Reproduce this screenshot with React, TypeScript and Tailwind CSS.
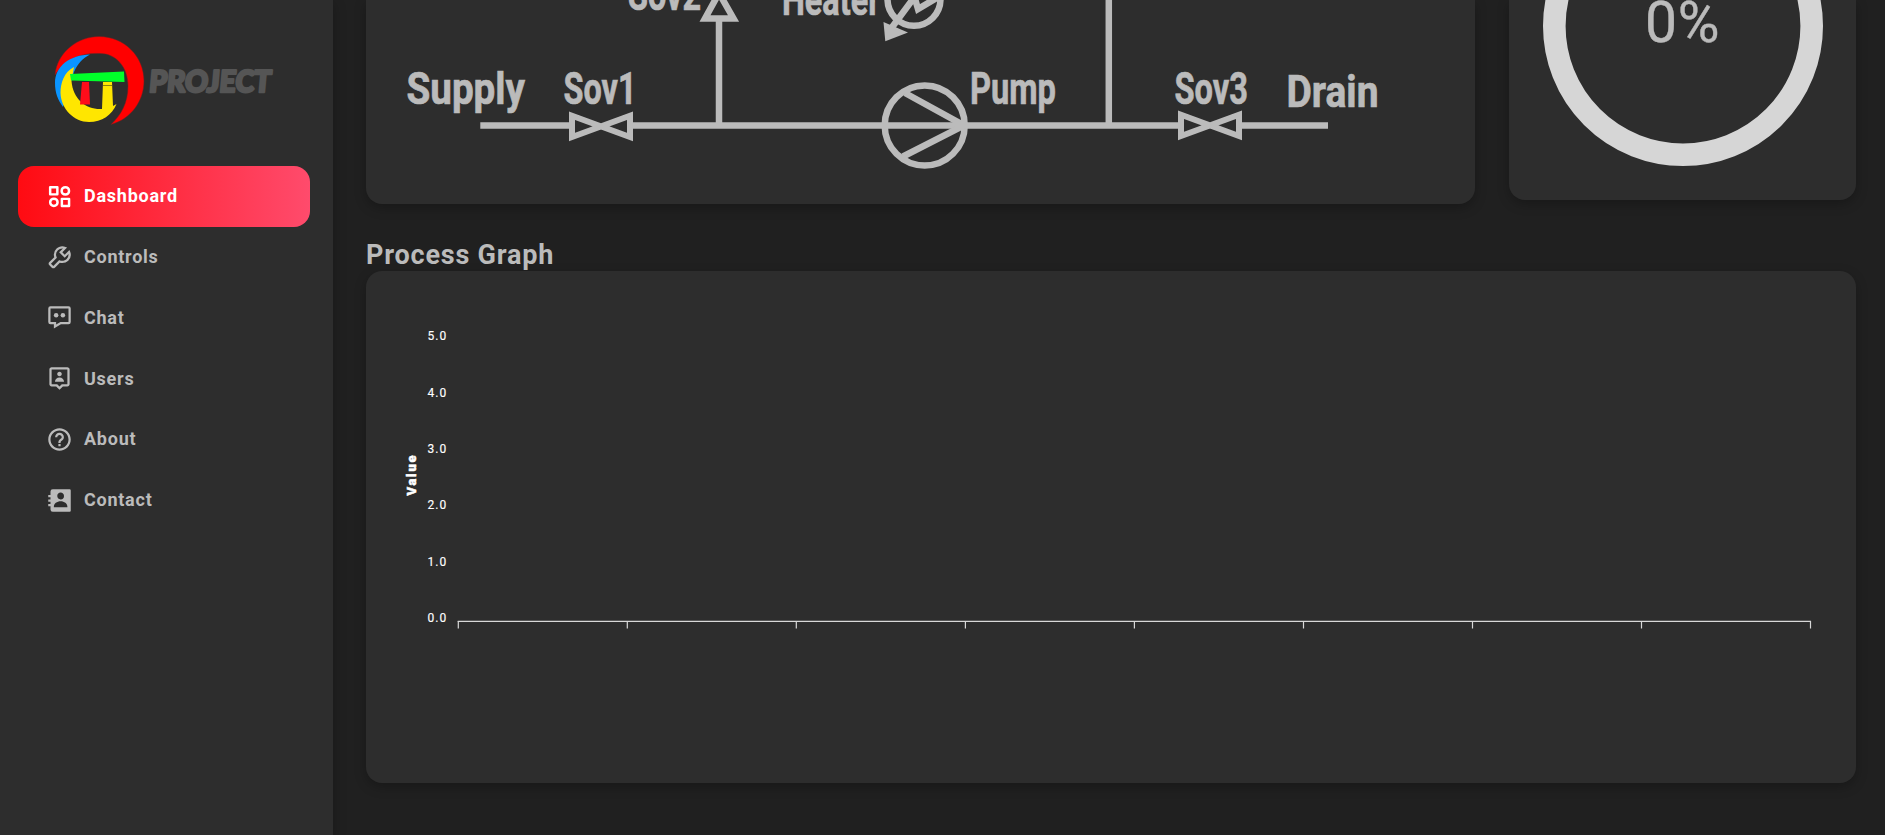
import type { ReactNode } from "react";
import { BiWrench, BiUserPin, BiHelpCircle, BiSolidContact } from "react-icons/bi";

function DashboardIcon() {
  return (
    <svg width="27" height="27" viewBox="0 0 24 24" fill="none" stroke="currentColor" strokeWidth="2.200">
      <path d="M3.700 3.700h6.400v6.400H3.700zM14.100 14.100h6.400v6.400h-6.400z" strokeLinejoin="round" />
      <circle cx="17.200" cy="7" r="3.300" />
      <circle cx="7" cy="17.200" r="3.300" />
    </svg>
  );
}

function ChatIcon() {
  return (
    <svg width="27" height="27" viewBox="0 0 24 24" fill="currentColor">
      <path fillRule="evenodd" d="M4 2h16a2 2 0 0 1 2 2v12a2 2 0 0 1-2 2h-6.700L7 21.800V18H4a2 2 0 0 1-2-2V4a2 2 0 0 1 2-2zm0 2v12h5v2.200L12.800 16H20V4z" />
      <circle cx="9" cy="10" r="2" />
      <circle cx="15" cy="10" r="2" />
    </svg>
  );
}

const nav: { label: string; icon: ReactNode; active?: boolean }[] = [
  { label: "Dashboard", icon: <DashboardIcon />, active: true },
  { label: "Controls", icon: <BiWrench size={27} /> },
  { label: "Chat", icon: <ChatIcon /> },
  { label: "Users", icon: <BiUserPin size={27} /> },
  { label: "About", icon: <BiHelpCircle size={27} /> },
  { label: "Contact", icon: <BiSolidContact size={27} /> },
];

function Logo() {
  return (
    <svg width="230" height="100" viewBox="50 30 230 100">
      <path fill="#ff0000" stroke="#6b2222" strokeWidth="0.5" d="M55 75C57 52 78 36.500 99 36.500C124 36.500 144 56 144 81C144 101 131 119 111 124.500C121 115 128 103 128 86C128 67 116 53.500 100 53.500C80 52.500 65 60 55 75Z" />
      <path fill="#0a94ff" d="M90 54.500C70 55 55 66 55 83C55 93 58 100 63 107L74 72C78 63 83 58 90 54.500Z" />
      <path fill="#ffe600" d="M74 67C64 72 60.500 83 60.500 93C61 109 74 122 89 122C102 122 112 115 116.500 104L113 106L112 82H103L102 109C87 110 73 100 71.500 81Z" />
      <path fill="#ff0d1a" d="M82 82H89L90 104.500H80Z" />
      <path stroke="#5c5410" strokeWidth="0.7" d="M103 85.500H112.500" />
      <path fill="#00ff2a" d="M70 74L124 71.500L124.500 82L71 80.500Z" />
      <text transform="translate(148.500 92) skewX(-5)" textLength="122" lengthAdjust="spacingAndGlyphs" fill="#555" stroke="#555" strokeWidth="2.600" strokeLinejoin="round" className="font-[Lato] text-[30px] font-black">PROJECT</text>
    </svg>
  );
}

function Sidebar() {
  return (
    <aside className="h-full w-[333px] shrink-0 bg-[#2d2d2d] px-[18px] pt-[30px] shadow-[0_4px_12px_rgba(0,0,0,0.25)]">
      <div className="h-[136px] pl-8">
        <Logo />
      </div>
      <nav>
        {nav.map((n) => (
          <a
            key={n.label}
            className={
              "flex h-[60.8px] w-[292px] items-center gap-[11px] rounded-2xl pl-7 text-[18px] font-bold tracking-[0.75px] " +
              (n.active ? "bg-linear-to-r/srgb from-[#ff0b12] to-[#ff4b6c] text-white" : "text-[#bbbbbb]")
            }
          >
            {n.icon}
            <span className="pb-[1.5px]">{n.label}</span>
          </a>
        ))}
      </nav>
    </aside>
  );
}

function Label({ x, y, w, children }: { x: number; y: number; w: number; children: string }) {
  return (
    <text x={x} y={y} textLength={w} lengthAdjust="spacingAndGlyphs" fill="#bbbbbb" stroke="#bbbbbb" strokeWidth="0.7" className="text-[44px] font-bold">
      {children}
    </text>
  );
}

function ProcessDiagram() {
  return (
    <svg width="1109" height="204" viewBox="366 0 1109 204" fill="none" stroke="#bbbbbb" strokeWidth="6.500">
      <path d="M480.300 125.500H570M632 125.500H1180M1240 125.500H1328M719 125V19M1108.800 125V0" />
      <path d="M572 115.800V137L630 115.800V137Z" strokeWidth="6" />
      <path d="M1181 114.800V136L1239 114.800V136Z" strokeWidth="6" />
      <path d="M705 18.500H733.500L719 -7Z" />
      <circle cx="924.700" cy="125.400" r="40" />
      <path d="M905 93L964 125.500L903 156.500" />
      <circle cx="914" cy="-0.800" r="26.500" />
      <path d="M890 30L914.500 -3L918 9L940 -4" strokeWidth="6.500" />
      <path d="M883.500 22L908 32.500L885.300 41.300Z" fill="#bbbbbb" stroke="none" />
      <Label x={406.5} y={104} w={118.5}>Supply</Label>
      <Label x={563.5} y={104} w={73}>Sov1</Label>
      <Label x={628} y={9.5} w={73}>Sov2</Label>
      <Label x={782} y={15} w={98}>Heater</Label>
      <Label x={970} y={104} w={86}>Pump</Label>
      <Label x={1174.5} y={104} w={73.5}>Sov3</Label>
      <Label x={1286.5} y={107} w={92}>Drain</Label>
    </svg>
  );
}

function Gauge() {
  return (
    <svg width="347" height="200" viewBox="1509 0 347 200">
      <circle cx="1683" cy="26" r="128.700" fill="none" stroke="#d6d6d6" strokeWidth="22.600" />
      <text x="1682.500" y="41.500" textAnchor="middle" fill="#bbbbbb" stroke="#bbbbbb" strokeWidth="0.4" className="text-[57px] tracking-[0.5px]">0%</text>
    </svg>
  );
}

const yTicks = [
  { v: "5.0", y: 340 },
  { v: "4.0", y: 397 },
  { v: "3.0", y: 453 },
  { v: "2.0", y: 509 },
  { v: "1.0", y: 566 },
  { v: "0.0", y: 622 },
];
const xTicks = [458.3, 627.3, 796.3, 965.4, 1134.4, 1303.5, 1472.5, 1641.5, 1810.5];

function ProcessChart() {
  return (
    <svg width="1490" height="512" viewBox="366 271 1490 512">
      {yTicks.map((t) => (
        <text key={t.v} x="427.500" y={t.y} fill="#fff" stroke="#fff" strokeWidth="0.15" className="text-[12px] tracking-[1px]">{t.v}</text>
      ))}
      <text transform="translate(416 495.500) rotate(-90)" fill="#fff" stroke="#fff" strokeWidth="0.5" className="text-[13px] font-black tracking-[1.7px]">Value</text>
      <path d="M457.700 621.400H1811" stroke="#d8d8d8" strokeWidth="1.200" />
      {xTicks.map((x) => (
        <path key={x} d={`M${x} 621V628.500`} stroke="#d8d8d8" strokeWidth="1.200" />
      ))}
    </svg>
  );
}

export default function App() {
  return (
    <div className="flex h-[835px] w-[1885px] overflow-hidden bg-[#202020] font-[Roboto,sans-serif]">
      <Sidebar />
      <main className="flex-1 pl-[33px]">
        <div className="flex items-start gap-[34px]">
          <section className="h-[204px] w-[1109px] rounded-b-2xl bg-[#2d2d2d] shadow-[0_4px_12px_rgba(0,0,0,0.25)]">
            <ProcessDiagram />
          </section>
          <section className="h-[200px] w-[347px] rounded-b-2xl bg-[#2d2d2d] shadow-[0_4px_12px_rgba(0,0,0,0.25)]">
            <Gauge />
          </section>
        </div>
        <h2 className="flex h-[67px] items-end text-[27px] leading-8 font-bold tracking-[0.8px] text-[#bbbbbb]">Process Graph</h2>
        <section className="h-[512px] w-[1490px] rounded-2xl bg-[#2d2d2d] shadow-[0_4px_12px_rgba(0,0,0,0.25)]">
          <ProcessChart />
        </section>
      </main>
    </div>
  );
}
